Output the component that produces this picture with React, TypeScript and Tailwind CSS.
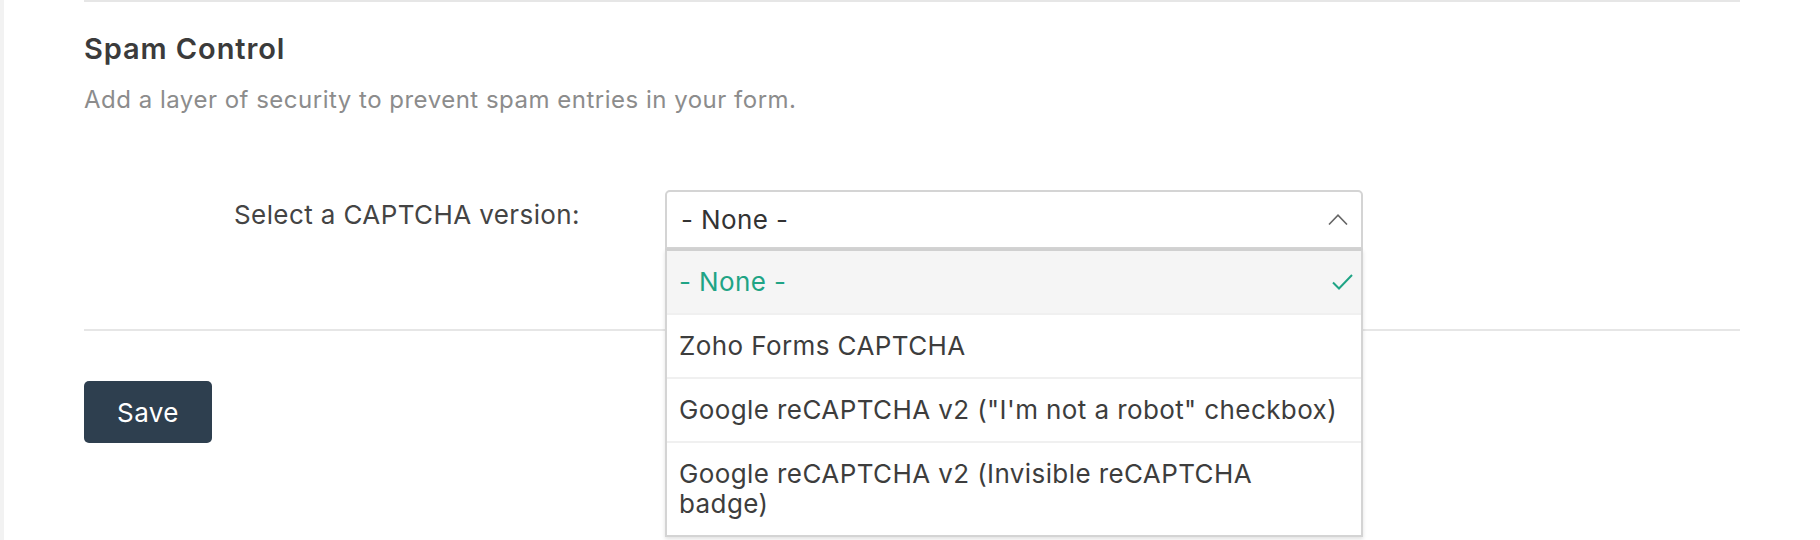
import React, { useState } from 'react';

const options = [
  '- None -',
  'Zoho Forms CAPTCHA',
  'Google reCAPTCHA v2 ("I\'m not a robot" checkbox)',
  'Google reCAPTCHA v2 (Invisible reCAPTCHA badge)',
];

const ChevronUp: React.FC = () => (
  <svg width="20" height="11" viewBox="0 0 20 11" fill="none">
    <path d="M1 10.5 L10 1.2 L19 10.5" stroke="#666" strokeWidth="1.6" />
  </svg>
);

const Check: React.FC = () => (
  <svg width="21" height="16" viewBox="0 0 21 16" fill="none">
    <path d="M1 8.5 L7 14.5 L20 1" stroke="#1fa485" strokeWidth="2" />
  </svg>
);

const App: React.FC = () => {
  const [selected, setSelected] = useState(0);

  return (
    <div className="flex h-[540px] w-full bg-white font-['Inter',sans-serif] text-[#3d3d3d]">
      <div className="w-[4px] shrink-0 bg-[#f2f2f2]" />
      <div className="flex-1 pl-[80px] pr-[80px]">
        <div className="h-[2px] bg-[#e6e6e6]" />

        <h2 className="mt-[29px] text-[29px] font-semibold leading-[36px] tracking-[0.9px] text-[#3b3b3b]">
          Spam Control
        </h2>
        <p className="mt-[17px] text-[24px] leading-[32px] tracking-[0.5px] text-[#8c8c8c]">
          Add a layer of security to prevent spam entries in your form.
        </p>

        {/* captcha row */}
        <div className="mt-[74px] flex items-start pl-[150px] text-[26px] tracking-[0.4px]">
          <label className="mt-[9px] w-[431px] leading-[32px] text-[#444]">
            Select a CAPTCHA version:
          </label>
          <div className="relative w-[698px]">
            <button className="flex h-[59px] w-full items-center justify-between rounded-t-[5px] border-2 border-[#d4d4d4] bg-white pl-[14px] pr-[13px] text-left text-[#333]">
              <span>{options[selected]}</span>
              <ChevronUp />
            </button>
            <ul className="absolute left-0 top-full z-10 w-full border-2 border-t-2 border-[#d4d4d4] border-t-[#d0d0d0] bg-white shadow-[0_2px_4px_rgba(0,0,0,0.12)]">
              {options.map((opt, i) => (
                <li
                  key={opt}
                  onClick={() => setSelected(i)}
                  className={`relative cursor-pointer py-4 pl-[12px] pr-[20px] leading-[30px] ${
                    i < options.length - 1 ? 'border-b-2 border-[#f0f0f0]' : ''
                  } ${i === selected ? 'bg-[#f5f5f5] text-[#1fa485]' : 'text-[#3d3d3d]'}`}
                >
                  {opt}
                  {i === selected && (
                    <span className="absolute right-[8px] top-[23px]">
                      <Check />
                    </span>
                  )}
                </li>
              ))}
            </ul>
          </div>
        </div>

        <div className="mt-[80px] h-[2px] bg-[#e6e6e6]" />

        <button className="mt-[50px] h-[62px] w-[128px] rounded-[5px] bg-[#2e3f4f] text-[26px] tracking-[0.4px] text-white">
          Save
        </button>
      </div>
    </div>
  );
};

export default App;
